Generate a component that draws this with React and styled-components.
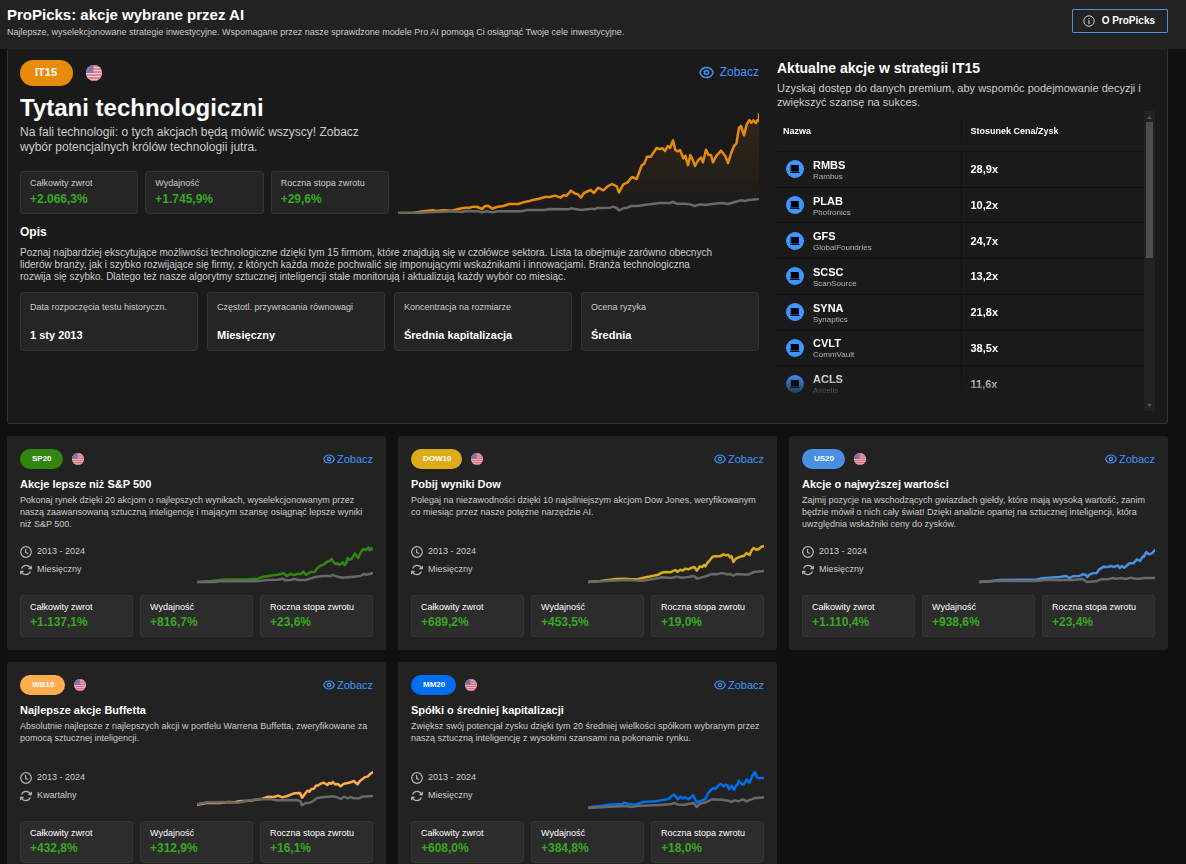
import React from 'react';
import styled, { createGlobalStyle } from 'styled-components';

const GlobalStyle = createGlobalStyle`
  * {
    box-sizing: border-box;
  }

  body {
    margin: 0;
    background: #101010;
    font-family: 'Liberation Sans', Arial, sans-serif;
    color: #fff;
    overflow: hidden;
  }

  h1, h2, h3, p, ul, dl, dd {
    margin: 0;
    padding: 0;
  }
`;

const Page = styled.div`
  height: 100vh;
  overflow-y: auto;
  scrollbar-width: none;
`;

const Header = styled.header`
  display: flex;
  justify-content: space-between;
  align-items: flex-start;
  height: 49px;
  padding: 6px 18px 0 7px;
  background: #222;
`;

const PageTitle = styled.h1`
  font-size: 15px;
  line-height: 18px;
`;

const PageSubtitle = styled.p`
  margin-top: 2px;
  font-size: 9px;
  line-height: 12px;
  color: #ccc;
`;

const AboutButton = styled.button`
  display: flex;
  align-items: center;
  gap: 7px;
  height: 24px;
  margin-top: 3px;
  padding: 0 12px 0 10px;
  border: 1px solid #4a90e2;
  border-radius: 1px;
  background: transparent;
  color: #fff;
  font: bold 10px/14px 'Liberation Sans', Arial, sans-serif;
`;

const Content = styled.main`
  padding: 0 18px 12px 7px;
`;

const Hero = styled.section`
  display: flex;
  gap: 18px;
  padding: 11px 12px 12px;
  border: 1px solid #333;
  border-top: 0;
  border-radius: 0 0 3px 3px;
  background: #1a1a1a;
`;

const HeroMain = styled.div`
  flex: 739 1 0;
  min-width: 0;
`;

const HeroSide = styled.div`
  flex: 378 1 0;
  min-width: 0;
`;

const Intro = styled.div`
  display: flex;
  gap: 9px;
`;

const IntroText = styled.div`
  flex: 369 1 0;
`;

const IntroChart = styled.div`
  flex: 361 1 0;
  display: flex;
  flex-direction: column;
  justify-content: space-between;
  align-items: flex-end;
`;

const TagRow = styled.div`
  display: flex;
  align-items: center;
  gap: ${props => (props.$large ? '13px' : '9px')};
`;

const Tag = styled.span`
  height: ${props => (props.$large ? '26px' : '20px')};
  padding: ${props => (props.$large ? '0 16px 0 15px' : '0 11px 0 12px')};
  border-radius: 13px;
  background: ${props => props.$color};
  font-size: ${props => (props.$large ? '11px' : '8px')};
  line-height: ${props => (props.$large ? '25px' : '19px')};
  font-weight: bold;
`;

const FlagSvg = styled.svg`
  display: block;
  border-radius: 50%;
`;

const ViewLink = styled.a`
  display: flex;
  align-items: center;
  gap: ${props => (props.$large ? '6px' : '2px')};
  height: ${props => (props.$large ? '24px' : '20px')};
  color: #3f94fa;
  font-size: ${props => (props.$large ? '12px' : '11px')};
  text-decoration: none;
`;

const HeroTitle = styled.h2`
  margin-top: 8px;
  font-size: 24px;
  line-height: 28px;
`;

const HeroLead = styled.p`
  max-width: 350px;
  margin-top: 3px;
  font-size: 12px;
  line-height: 15px;
  color: #ccc;
`;

const Stats = styled.dl`
  display: grid;
  grid-template-columns: repeat(3, 1fr);
  gap: 7px;
  margin-top: ${props => (props.$large ? '16px' : '11px')};
`;

const Stat = styled.div`
  padding: 5px 9px 6px;
  border: 1px solid ${props => (props.$large ? '#333' : '#353535')};
  border-radius: 3px;
  background: ${props => (props.$large ? '#252525' : '#2c2c2c')};
`;

const StatLabel = styled.dt`
  font-size: 9px;
  line-height: 12px;
  white-space: nowrap;
  color: ${props => (props.$large ? '#ccc' : '#fff')};
`;

const StatValue = styled.dd`
  padding-top: ${props => (props.$large ? '2px' : '1px')} !important;
  font-size: 12px;
  line-height: 16px;
  font-weight: bold;
  color: #37a920;
`;

const SectionTitle = styled.h3`
  margin-top: 10px;
  font-size: 12px;
  line-height: 16px;
`;

const Description = styled.p`
  max-width: 702px;
  margin-top: 7px;
  font-size: 10px;
  line-height: 12px;
  color: #ccc;
`;

const Facts = styled.dl`
  display: grid;
  grid-template-columns: repeat(4, 1fr);
  gap: 9px;
  margin-top: 9px;
`;

const Fact = styled.div`
  padding: 8px 9px;
  border: 1px solid #333;
  border-radius: 3px;
  background: #252525;
`;

const FactLabel = styled.dt`
  font-size: 9px;
  line-height: 12px;
  color: #ccc;
`;

const FactValue = styled.dd`
  padding-top: 15px !important;
  font-size: 11px;
  line-height: 14px;
  font-weight: bold;
`;

const SideTitle = styled.h3`
  font-size: 14px;
  line-height: 16px;
`;

const SideLead = styled.p`
  margin-top: 5px;
  font-size: 11px;
  line-height: 14px;
  color: #ccc;
`;

const StockPane = styled.div`
  display: flex;
  height: 300px;
  margin-top: 2px;
`;

const StockViewport = styled.div`
  flex: 1;
  overflow: hidden;
  mask-image: linear-gradient(#000 calc(100% - 38px), transparent calc(100% - 10px));
`;

const StockTable = styled.table`
  width: 100%;
  height: 291px;
  table-layout: fixed;
  border-collapse: separate;
  border-spacing: 0;
`;

const HeadCell = styled.th`
  height: 41px;
  padding: 9px 0 0;
  border-bottom: 1px solid #111;
  text-align: left;
  vertical-align: top;
  font-size: 9px;
`;

const HeadLabel = styled.span`
  display: block;
  padding-left: ${props => (props.$divided ? '9px' : '6px')};
  border-left: ${props => (props.$divided ? '1px solid #111' : '0')};
  line-height: 23px;
`;

const StockCell = styled.td`
  padding: 0 0 0 9px;
  border-bottom: 1px solid #111;
  border-left: ${props => (props.$divided ? '1px solid #111' : '0')};
  font-size: 11px;
  font-weight: bold;
`;

const Stock = styled.div`
  display: flex;
  align-items: center;
  gap: 9px;
`;

const Ticker = styled.div`
  font-size: 11px;
  line-height: 14px;
`;

const Company = styled.div`
  font-size: 8px;
  line-height: 9px;
  font-weight: normal;
  color: #b4b4b4;
`;

const Scrollbar = styled.div`
  display: flex;
  flex-direction: column;
  align-items: center;
  width: 11px;
  background: #222;
`;

const ScrollTrack = styled.div`
  flex: 1;
  width: 7px;
`;

const ScrollThumb = styled.div`
  height: 49%;
  background: #4d4d4d;
`;

const Cards = styled.div`
  display: grid;
  grid-template-columns: repeat(3, 1fr);
  gap: 12px;
  margin-top: 12px;
`;

const CardBox = styled.article`
  padding: 13px;
  border-radius: 3px;
  background: #222;
`;

const CardHead = styled.div`
  display: flex;
  justify-content: space-between;
`;

const CardTitle = styled.h3`
  margin-top: 8px;
  font-size: 11px;
  line-height: 14px;
`;

const CardText = styled.p`
  min-height: 36px;
  margin-top: 3px;
  font-size: 9px;
  line-height: 12px;
  color: #ccc;
`;

const CardBody = styled.div`
  display: flex;
  justify-content: space-between;
  align-items: flex-end;
  height: 42px;
  margin-top: 12px;
`;

const MetaList = styled.ul`
  align-self: flex-start;
  list-style: none;
`;

const MetaItem = styled.li`
  display: flex;
  align-items: center;
  gap: 5px;
  height: 18px;
  font-size: 9px;
  color: #ccc;

  svg {
    margin-top: 2px;
    color: #b5b5b5;
  }
`;

const ChartSvg = styled.svg`
  display: block;
  width: ${props => (props.$large ? '100%' : '50%')};
  height: ${props => (props.$large ? '102px' : '40px')};

  polyline {
    fill: none;
    stroke-width: 2.5px;
    stroke-linejoin: round;
    vector-effect: non-scaling-stroke;
  }
`;

const stocks = [
  ['RMBS', 'Rambus', '28,9x'],
  ['PLAB', 'Photronics', '10,2x'],
  ['GFS', 'GlobalFoundries', '24,7x'],
  ['SCSC', 'ScanSource', '13,2x'],
  ['SYNA', 'Synaptics', '21,8x'],
  ['CVLT', 'CommVault', '38,5x'],
  ['ACLS', 'Axcelis', '11,6x'],
];

const facts = [
  ['Data rozpoczęcia testu historyczn.', '1 sty 2013'],
  ['Częstotl. przywracania równowagi', 'Miesięczny'],
  ['Koncentracja na rozmiarze', 'Średnia kapitalizacja'],
  ['Ocena ryzyka', 'Średnia'],
];

const statLabels = ['Całkowity zwrot', 'Wydajność', 'Roczna stopa zwrotu'];

const heroLine =
  '24,489 72,488 100,484 128,481 140,483 160,481 185,482 205,477 225,473 240,473 250,470 262,471 276,477 284,469 293,467 307,476 320,471 340,468 358,462 385,462 400,457 415,454 428,450 445,447 465,441 480,441 495,437 512,443 520,436 530,437 543,422 556,431 563,432 573,443 582,429 602,420 612,429 624,413 640,421 653,409 666,402 680,409 687,427 700,403 712,398 726,381 740,387 755,346 763,341 771,320 782,320 800,294 808,297 818,295 825,303 833,288 840,294 849,271 856,300 863,304 870,300 880,325 886,317 894,346 901,315 908,329 915,348 925,330 933,323 939,337 948,299 955,314 963,315 969,337 978,319 993,302 1006,318 1014,339 1024,308 1032,288 1039,281 1047,234 1053,228 1062,256 1070,224 1078,210 1084,218 1090,211 1098,219 1102,211 1107,212 1107,190';
const heroBase =
  '24,490 90,488 120,487 195,484 215,486 228,483 265,484 275,487 290,484 308,487 325,484 395,484 410,480 462,480 480,477 535,478 543,475 572,480 605,476 612,478 622,474 660,473 670,470 680,474 687,481 700,475 712,473 724,468 745,468 765,464 780,463 810,459 840,459 849,456 860,461 880,461 900,463 914,468 930,463 945,465 965,462 995,459 1015,462 1045,453 1055,451 1065,453 1075,450 1107,447';

const cards = [
  {
    tag: 'SP20',
    color: '#31860f',
    title: 'Akcje lepsze niż S&P 500',
    text: 'Pokonaj rynek dzięki 20 akcjom o najlepszych wynikach, wyselekcjonowanym przez naszą zaawansowaną sztuczną inteligencję i mającym szansę osiągnąć lepsze wyniki niż S&P 500.',
    rebalance: 'Miesięczny',
    values: ['+1.137,1%', '+816,7%', '+23,6%'],
    line: '588,456 630,453 665,449 740,448 770,446 785,441 800,439 815,436 830,434 840,432 849,429 857,438 870,432 880,435 890,432 900,432 908,425 916,435 930,426 942,426 948,417 955,410 963,406 970,403 980,395 987,393 993,387 1000,398 1005,402 1010,399 1015,405 1020,402 1027,397 1032,405 1038,398 1041,384 1047,389 1053,387 1063,371 1068,377 1073,384 1080,368 1088,357 1096,360 1104,353 1107,361 1112,355 1119,360',
    base: '588,456 640,456 660,453 765,454 800,450 830,449 845,446 855,451 870,450 880,447 895,450 915,450 940,442 965,438 990,438 995,435 1010,440 1027,443 1060,440 1080,438 1090,432 1098,434 1119,429',
  },
  {
    tag: 'DOW10',
    color: '#dbae17',
    title: 'Pobij wyniki Dow',
    text: 'Polegaj na niezawodności dzięki 10 najsilniejszym akcjom Dow Jones, weryfikowanym co miesiąc przez nasze potężne narzędzie AI.',
    rebalance: 'Miesięczny',
    values: ['+689,2%', '+453,5%', '+19,0%'],
    line: '588,456 625,453 672,447 700,446 715,448 740,447 755,443 770,440 785,437 800,434 810,428 820,426 836,427 850,420 857,425 866,419 872,422 880,416 890,418 900,413 908,411 915,422 925,409 932,411 937,405 941,409 948,398 955,390 962,381 968,379 985,379 995,373 1003,376 1010,374 1015,382 1020,379 1025,396 1033,386 1040,383 1050,379 1058,377 1065,369 1074,375 1081,360 1086,354 1094,359 1102,357 1110,350 1119,348',
    base: '588,456 640,453 700,450 750,452 790,446 810,442 840,444 855,440 870,443 890,441 905,438 910,440 915,446 930,442 945,438 960,432 975,433 985,430 997,430 1005,433 1017,433 1026,437 1035,432 1070,434 1088,426 1119,423',
  },
  {
    tag: 'US20',
    color: '#4a90e2',
    title: 'Akcje o najwyższej wartości',
    text: 'Zajmij pozycje na wschodzących gwiazdach giełdy, które mają wysoką wartość, zanim będzie mówił o nich cały świat! Dzięki analizie opartej na sztucznej inteligencji, która uwzględnia wskaźniki ceny do zysków.',
    rebalance: 'Miesięczny',
    values: ['+1.110,4%', '+938,6%', '+23,4%'],
    line: '588,456 620,454 650,450 760,449 775,445 800,443 830,441 850,438 860,444 870,439 890,438 900,433 909,434 914,441 920,434 930,430 942,429 950,418 955,415 963,410 975,411 985,408 995,411 1005,406 1012,414 1017,408 1025,413 1035,405 1040,400 1052,400 1063,388 1073,393 1080,380 1084,380 1091,366 1099,373 1108,370 1119,358',
    base: '588,456 640,453 760,453 795,449 830,451 845,449 870,450 900,447 912,456 940,454 955,448 975,448 990,444 1000,446 1015,444 1030,447 1045,443 1065,447 1085,444 1119,444',
  },
  {
    tag: 'WB15',
    color: '#ffad4f',
    title: 'Najlepsze akcje Buffetta',
    text: 'Absolutnie najlepsze z najlepszych akcji w portfelu Warrena Buffetta, zweryfikowane za pomocą sztucznej inteligencji.',
    rebalance: 'Kwartalny',
    values: ['+432,8%', '+312,9%', '+16,1%'],
    line: '588,446 620,440 655,441 685,438 700,439 720,435 745,434 785,428 802,422 820,423 832,419 845,424 860,420 870,416 880,412 898,411 904,425 914,412 920,404 926,407 932,399 940,398 946,389 953,388 960,383 970,380 980,387 986,381 991,383 997,378 1003,385 1012,384 1020,391 1030,383 1042,381 1050,379 1060,375 1071,385 1078,375 1085,370 1092,364 1102,361 1110,353 1119,348',
    base: '588,444 620,439 680,438 710,440 740,434 770,430 810,430 830,433 890,432 900,437 904,448 915,441 928,440 937,435 950,426 965,424 1000,421 1010,424 1020,429 1030,422 1042,427 1050,423 1060,427 1075,427 1085,422 1119,420',
  },
  {
    tag: 'MM20',
    color: '#006eee',
    title: 'Spółki o średniej kapitalizacji',
    text: 'Zwiększ swój potencjał zysku dzięki tym 20 średniej wielkości spółkom wybranym przez naszą sztuczną inteligencję z wysokimi szansami na pokonanie rynku.',
    rebalance: 'Miesięczny',
    values: ['+608,0%', '+384,8%', '+18,0%'],
    line: '588,454 625,450 650,446 690,444 697,440 710,444 730,446 755,438 790,436 815,432 830,429 840,420 848,416 858,430 866,422 873,428 880,423 890,430 904,418 910,428 915,440 930,434 942,428 947,416 952,408 960,400 965,396 972,399 980,388 988,384 996,391 1002,386 1008,389 1012,400 1020,389 1027,402 1033,389 1038,386 1042,374 1048,382 1056,386 1066,370 1074,380 1082,360 1090,348 1098,366 1119,366',
    base: '588,456 640,453 700,450 720,453 735,450 800,447 835,445 848,441 860,446 880,446 905,441 915,453 925,443 945,438 960,430 990,431 1010,434 1018,438 1030,433 1040,436 1055,430 1065,436 1087,427 1119,424',
  },
];

const EyeIcon = ({ width }) => (
  <svg width={width} height={width} viewBox="0 0 16 16" fill="none" stroke="currentColor" strokeWidth="1.5">
    <path d="M0.8 8C2.2 4.6 4.8 2.6 8 2.6S13.8 4.6 15.2 8C13.8 11.4 11.2 13.4 8 13.4S2.2 11.4 0.8 8Z" />
    <circle cx="8" cy="8" r="2.2" />
  </svg>
);

const InfoIcon = () => (
  <svg width="12" height="12" viewBox="0 0 12 12" fill="none" stroke="#ccc">
    <circle cx="6" cy="6" r="5.2" />
    <path d="M6 5.2V9M6 3V4.2" strokeWidth="1.2" />
  </svg>
);

const ClockIcon = () => (
  <svg width="12" height="12" viewBox="0 0 12 12" fill="none" stroke="currentColor" strokeWidth="1.2">
    <circle cx="6" cy="6" r="5.3" />
    <path d="M5.6 3V6.5L8.2 7.5" />
  </svg>
);

const RefreshIcon = () => (
  <svg width="12" height="12" viewBox="0 0 12 12" fill="none" stroke="currentColor" strokeWidth="1.2">
    <path d="M1.6 4.6C2.3 2.6 4 1.4 6 1.4C8 1.4 9.6 2.5 10.5 4.3M11.3 1.8V4.7H8.4" />
    <path d="M10.4 7.4C9.7 9.4 8 10.6 6 10.6C4 10.6 2.4 9.5 1.5 7.7M0.7 10.2V7.3H3.6" />
  </svg>
);

const StockIcon = () => (
  <svg width="18" height="18" viewBox="0 0 18 18">
    <circle cx="9" cy="9" r="9" fill="#3f97fd" />
    <rect x="4.5" y="5" width="8.5" height="7" fill="#143f70" />
    <rect x="5" y="5" width="7.6" height="6" fill="#000" />
    <rect x="4" y="12" width="9.6" height="1" fill="#07121f" />
  </svg>
);

const Flag = ({ size }) => (
  <FlagSvg width={size} height={size} viewBox="0 0 16 16">
    <rect width="16" height="16" fill="#f3d3d8" />
    <path d="M0 1H16M0 4H16M0 7H16M0 10H16M0 13H16M0 15.6H16" stroke="#de6a7a" strokeWidth="1.7" />
    <rect width="7.4" height="7.8" fill="#6d6da8" />
    <path d="M2 2.5H7M2 4.5H7M1 6.5H7" stroke="#b6b4d6" strokeWidth="0.7" strokeDasharray="0.8 1" />
  </FlagSvg>
);

const ScrollArrow = ({ down }) => (
  <svg width="11" height="11" viewBox="0 0 11 11">
    <path d={down ? 'M3 4H8L5.5 7Z' : 'M3 8H8L5.5 5Z'} fill="#555" />
  </svg>
);

const StatGroup = ({ values, large }) => (
  <Stats $large={large}>
    {values.map((value, index) => (
      <Stat key={statLabels[index]} $large={large}>
        <StatLabel $large={large}>{statLabels[index]}</StatLabel>
        <StatValue $large={large}>{value}</StatValue>
      </Stat>
    ))}
  </Stats>
);

const HeroChart = () => (
  <ChartSvg $large viewBox="24 186 1083 306" preserveAspectRatio="none">
    <defs>
      <linearGradient id="heroFill" x1="0" y1="0" x2="0" y2="1">
        <stop offset="0" stopColor="#e78b0c" stopOpacity="0.12" />
        <stop offset="1" stopColor="#e78b0c" stopOpacity="0" />
      </linearGradient>
    </defs>
    <polygon points={`${heroLine} 1107,490 24,490`} fill="url(#heroFill)" />
    <polyline points={heroLine} stroke="#e78b0c" />
    <polyline points={heroBase} stroke="#696969" />
  </ChartSvg>
);

const StrategyCard = ({ card }) => (
  <CardBox>
    <CardHead>
      <TagRow>
        <Tag $color={card.color}>{card.tag}</Tag>
        <Flag size={12} />
      </TagRow>
      <ViewLink href="#">
        <EyeIcon width={12} />
        Zobacz
      </ViewLink>
    </CardHead>
    <CardTitle>{card.title}</CardTitle>
    <CardText>{card.text}</CardText>
    <CardBody>
      <MetaList>
        <MetaItem>
          <ClockIcon />
          2013 - 2024
        </MetaItem>
        <MetaItem>
          <RefreshIcon />
          {card.rebalance}
        </MetaItem>
      </MetaList>
      <ChartSvg viewBox="588 342 531 120" preserveAspectRatio="none">
        <polyline points={card.line} stroke={card.color} />
        <polyline points={card.base} stroke="#696969" />
      </ChartSvg>
    </CardBody>
    <StatGroup values={card.values} />
  </CardBox>
);

const App = () => {
  return (
    <Page>
      <GlobalStyle />
      <Header>
        <div>
          <PageTitle>ProPicks: akcje wybrane przez AI</PageTitle>
          <PageSubtitle>
            Najlepsze, wyselekcjonowane strategie inwestycyjne. Wspomagane przez nasze sprawdzone modele Pro AI
            pomogą Ci osiągnąć Twoje cele inwestycyjne.
          </PageSubtitle>
        </div>
        <AboutButton type="button">
          <InfoIcon />
          O ProPicks
        </AboutButton>
      </Header>

      <Content>
        <Hero>
          <HeroMain>
            <Intro>
              <IntroText>
                <TagRow $large>
                  <Tag $large $color="#e78b0c">IT15</Tag>
                  <Flag size={16} />
                </TagRow>
                <HeroTitle>Tytani technologiczni</HeroTitle>
                <HeroLead>
                  Na fali technologii: o tych akcjach będą mówić wszyscy! Zobacz wybór potencjalnych królów
                  technologii jutra.
                </HeroLead>
                <StatGroup large values={['+2.066,3%', '+1.745,9%', '+29,6%']} />
              </IntroText>
              <IntroChart>
                <ViewLink $large href="#">
                  <EyeIcon width={15} />
                  Zobacz
                </ViewLink>
                <HeroChart />
              </IntroChart>
            </Intro>

            <SectionTitle>Opis</SectionTitle>
            <Description>
              Poznaj najbardziej ekscytujące możliwości technologiczne dzięki tym 15 firmom, które znajdują się w
              czołówce sektora. Lista ta obejmuje zarówno obecnych liderów branży, jak i szybko rozwijające się
              firmy, z których każda może pochwalić się imponującymi wskaźnikami i innowacjami. Branża
              technologiczna rozwija się szybko. Dlatego też nasze algorytmy sztucznej inteligencji stale
              monitorują i aktualizują każdy wybór co miesiąc.
            </Description>

            <Facts>
              {facts.map(([label, value]) => (
                <Fact key={label}>
                  <FactLabel>{label}</FactLabel>
                  <FactValue>{value}</FactValue>
                </Fact>
              ))}
            </Facts>
          </HeroMain>

          <HeroSide>
            <SideTitle>Aktualne akcje w strategii IT15</SideTitle>
            <SideLead>
              Uzyskaj dostęp do danych premium, aby wspomóc podejmowanie decyzji i zwiększyć szansę na sukces.
            </SideLead>
            <StockPane>
              <StockViewport>
                <StockTable>
                  <thead>
                    <tr>
                      <HeadCell><HeadLabel>Nazwa</HeadLabel></HeadCell>
                      <HeadCell><HeadLabel $divided>Stosunek Cena/Zysk</HeadLabel></HeadCell>
                    </tr>
                  </thead>
                  <tbody>
                    {stocks.map(([ticker, company, ratio]) => (
                      <tr key={ticker}>
                        <StockCell>
                          <Stock>
                            <StockIcon />
                            <div>
                              <Ticker>{ticker}</Ticker>
                              <Company>{company}</Company>
                            </div>
                          </Stock>
                        </StockCell>
                        <StockCell $divided>{ratio}</StockCell>
                      </tr>
                    ))}
                  </tbody>
                </StockTable>
              </StockViewport>
              <Scrollbar>
                <ScrollArrow />
                <ScrollTrack>
                  <ScrollThumb />
                </ScrollTrack>
                <ScrollArrow down />
              </Scrollbar>
            </StockPane>
          </HeroSide>
        </Hero>

        <Cards>
          {cards.map(card => (
            <StrategyCard key={card.tag} card={card} />
          ))}
        </Cards>
      </Content>
    </Page>
  );
};

export default App;
